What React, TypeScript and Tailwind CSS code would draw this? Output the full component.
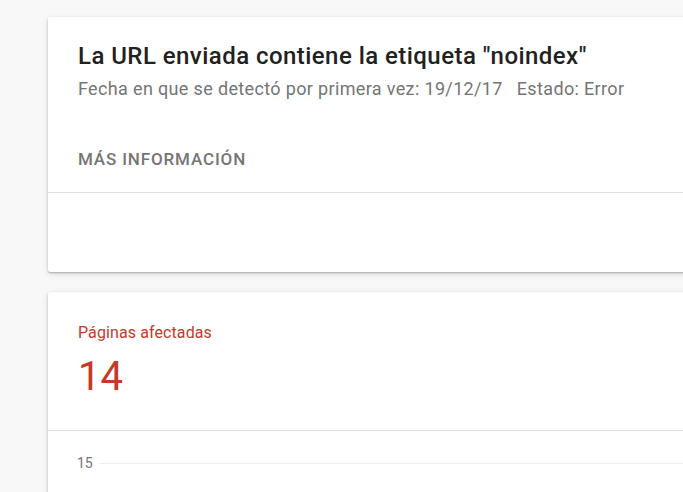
export default function App() {
  return (
    <div
      className="w-[683px] h-[492px] overflow-hidden bg-[#f8f8f8] pl-[48px] pt-[17px]"
      style={{ fontFamily: "Roboto, 'Liberation Sans', sans-serif" }}
    >
      <div className="w-[680px] bg-white rounded-[2px] shadow-[0_1px_2px_rgba(0,0,0,0.25),0_2px_6px_rgba(0,0,0,0.12)]">
        <div className="px-[30px] pt-[25px] pb-[21px]">
          <div className="text-[24px] leading-[28px] font-medium text-[#212121] tracking-[0.45px] whitespace-nowrap">
            La URL enviada contiene la etiqueta "noindex"
          </div>
          <div className="mt-[7px] text-[18px] leading-[24px] text-[#757575] tracking-[0.35px] whitespace-nowrap">
            Fecha en que se detectó por primera vez: 19/12/17
            <span className="ml-[14px]">Estado: Error</span>
          </div>
          <div className="mt-[46px] text-[17px] leading-[24px] font-medium text-[#757575] tracking-[0.85px]">
            MÁS INFORMACIÓN
          </div>
        </div>
        <div className="border-t border-[#e0e0e0] h-[80px]" />
      </div>

      <div className="mt-[20px] w-[680px] h-[300px] bg-white rounded-[2px] shadow-[0_1px_2px_rgba(0,0,0,0.25),0_2px_6px_rgba(0,0,0,0.12)]">
        <div className="px-[30px] pt-[31px] pb-[29px]">
          <div className="text-[16px] leading-[20px] text-[#c5392b] tracking-[0.1px]">Páginas afectadas</div>
          <div className="mt-[10px] text-[40px] leading-[48px] text-[#c53929]">14</div>
        </div>
        <div className="border-t border-[#e0e0e0] pt-[22px] pl-[29px] flex items-center">
          <span className="text-[14px] leading-[20px] text-[#757575]">15</span>
          <div className="ml-[7px] flex-1 h-px bg-[#ececec]" />
        </div>
      </div>
    </div>
  );
}
